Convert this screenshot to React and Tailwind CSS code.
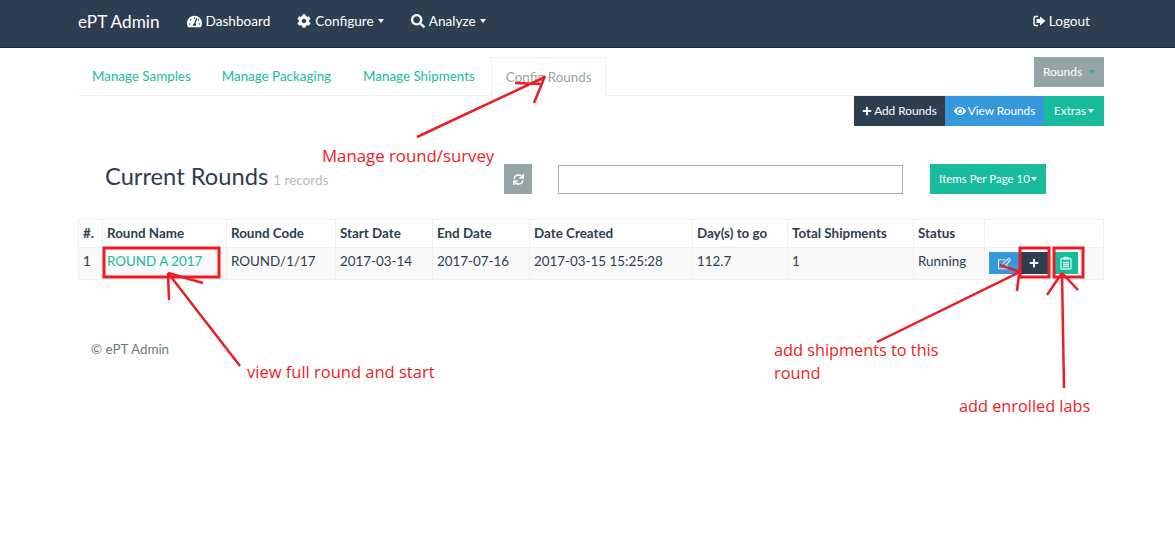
import { FaTachometerAlt, FaCog, FaSearch, FaPlus, FaEye, FaSync, FaRegEdit } from "react-icons/fa";

const columns = [
  ["#.", "w-[24px]"],
  ["Round Name", "w-[124px]"],
  ["Round Code", "w-[109px]"],
  ["Start Date", "w-[97px]"],
  ["End Date", "w-[97px]"],
  ["Date Created", "w-[163px]"],
  ["Day(s) to go", "w-[95px]"],
  ["Total Shipments", "w-[126px]"],
  ["Status", "w-[71px]"],
  ["", "w-[119px]"],
];

const row = ["1", "ROUND A 2017", "ROUND/1/17", "2017-03-14", "2017-07-16", "2017-03-15 15:25:28", "112.7", "1", "Running"];

function Caret({ className = "border-t-white" }) {
  return <span className={`inline-block w-0 h-0 border-x-[3px] border-x-transparent border-t-[4px] ${className}`} />;
}

function NavItem({ icon, label, caret }) {
  return (
    <a className="flex items-center gap-[4px] text-white text-[13.6px] mr-[27px]">
      {icon}
      <span>{label}</span>
      {caret && <Caret />}
    </a>
  );
}

function LogoutIcon() {
  return (
    <svg width="13" height="12" viewBox="0 0 13 12">
      <path d="M5 1.5H2.5A1.5 1.5 0 0 0 1 3v6a1.5 1.5 0 0 0 1.5 1.5H5" fill="none" stroke="white" strokeWidth="1.4" />
      <path d="M7 1.5 L12.5 6 L7 10.5 V8 H3.5 V4 H7 Z" fill="white" />
    </svg>
  );
}

function ClipboardIcon() {
  return (
    <svg width="12" height="14" viewBox="0 0 12 14" fill="none" stroke="#c9f1e8" strokeWidth="1.3">
      <rect x="1" y="2.5" width="10" height="10.5" rx="1" />
      <rect x="3.5" y="0.8" width="5" height="3" fill="#c9f1e8" stroke="none" />
      <path d="M3 6.5H9M3 8.5H9M3 10.5H9" />
    </svg>
  );
}

function Annotations() {
  return (
    <>
      <svg className="absolute left-0 top-0 pointer-events-none" width="1175" height="541" fill="none" stroke="#ed1c24" strokeWidth="2.5">
        {/* config rounds */}
        <path d="M417 137 L545 77 M515 83 L541 84 M545 76 L534 103" />
        {/* round name */}
        <rect x="104" y="248" width="115" height="29" strokeWidth="3" />
        <path d="M240 366 L168 273 M168 273 L203 283 M168 273 L169 300" />
        {/* shipments */}
        <rect x="1020" y="248" width="29" height="29" strokeWidth="3" />
        <rect x="1054" y="248" width="29" height="29" strokeWidth="3" />
        <path d="M877 342 L1020 272 M1000 265 L1020 272 M1017 291 L1019 275" />
        {/* enrolled labs */}
        <path d="M1064 388 L1062 273 M1047 295 L1062 273 M1078 290 L1062 273" />
      </svg>
      <div className="absolute left-[322px] top-[143px] text-[#ed1c24] text-[16.8px] font-['Open_Sans',sans-serif]">Manage round/survey</div>
      <div className="absolute left-[247px] top-[360px] text-[#ed1c24] text-[16.5px] font-['Open_Sans',sans-serif]">view full round and start</div>
      <div className="absolute left-[774px] top-[339px] w-[190px] leading-[23px] text-[#ed1c24] text-[16.3px] font-['Open_Sans',sans-serif]">add shipments to this round</div>
      <div className="absolute left-[959px] top-[394px] text-[#ed1c24] text-[16.3px] font-['Open_Sans',sans-serif]">add enrolled labs</div>
    </>
  );
}

export default function App() {
  return (
    <div className="relative h-[541px] overflow-hidden bg-white font-['Lato',sans-serif] text-[13.4px] text-[#2c3e50]">
      <nav className="h-[48px] bg-[#2c3e50] border-b border-[#1f2d3a] pl-[78px] pr-[85px] pb-[4px] flex items-center">
        <span className="text-white text-[17.2px] mr-[27px]">ePT Admin</span>
        <NavItem icon={<FaTachometerAlt className="text-[15px]" />} label="Dashboard" />
        <NavItem icon={<FaCog className="text-[14px]" />} label="Configure" caret />
        <NavItem icon={<FaSearch className="text-[14px]" />} label="Analyze" caret />
        <a className="ml-auto flex items-center gap-[3px] text-white text-[13.6px]">
          <LogoutIcon />
          Logout
        </a>
      </nav>

      <div className="pl-[78px] w-[1104px]">
        <div className="flex items-start pt-[9px]">
          <div className="flex-1 h-[39px] border-b border-[#ecf0f1] flex text-[#18bc9c]">
            <a className="px-[14px] leading-[38px]">Manage Samples</a>
            <a className="ml-[3px] px-[14px] leading-[38px]">Manage Packaging</a>
            <a className="ml-[4px] px-[14px] leading-[38px]">Manage Shipments</a>
            <a className="ml-[2px] px-[14px] h-[39px] leading-[38px] text-[#95a5a6] bg-white border border-[#ecf0f1] border-b-white">Config Rounds</a>
          </div>
          <button className="h-[30px] w-[70px] bg-[#95a5a6] text-white text-[12px] flex items-center justify-center gap-[7px]">
            Rounds <Caret className="border-t-[#18bc9c]" />
          </button>
        </div>

        <div className="flex justify-end text-white text-[11.8px]">
          <button className="h-[30px] w-[91px] bg-[#2c3e50] flex items-center justify-center gap-[2px]">
            <FaPlus className="text-[10px]" /> Add Rounds
          </button>
          <button className="h-[30px] w-[99px] bg-[#3498db] flex items-center justify-center gap-[2px]">
            <FaEye className="text-[12px]" /> View Rounds
          </button>
          <button className="h-[30px] w-[60px] bg-[#18bc9c] flex items-center justify-center gap-[2px]">
            Extras <Caret />
          </button>
        </div>

        <div className="flex items-center mt-[38px] h-[30px]">
          <h1 className="ml-[27px] w-[399px] pb-[5px] text-[23.7px] font-normal whitespace-nowrap">
            Current Rounds <small className="ml-[-1px] text-[13.5px] text-[#b4bcc2]">1 records</small>
          </h1>
          <button className="w-[28px] h-[30px] bg-[#95a5a6] text-white flex items-center justify-center">
            <FaSync className="text-[11px]" />
          </button>
          <input className="ml-[26px] w-[345px] h-[29px] border border-[#aaaaaa] bg-white" />
          <button className="ml-[27px] w-[116px] h-[30px] bg-[#18bc9c] text-white text-[11.5px] flex items-center justify-center gap-px">
            Items Per Page 10 <Caret />
          </button>
        </div>

        <table className="mt-[25px] w-[1025px] table-fixed border-collapse">
          <thead>
            <tr className="h-[28px]">
              {columns.map(([label, width]) => (
                <th key={label} className={`${width} border border-[#ecf0f1] px-[4px] pb-[1px] text-left font-bold`}>{label}</th>
              ))}
            </tr>
          </thead>
          <tbody>
            <tr className="h-[32px] bg-[#f9f9f9]">
              {row.map((value, i) => (
                <td key={i} className={`border border-[#ecf0f1] px-[4px] pb-[5px] ${i === 1 ? "text-[#18bc9c]" : ""}`}>{value}</td>
              ))}
              <td className="border border-[#ecf0f1] pl-[4px] pb-[1px]">
                <div className="flex text-white text-[12px]">
                  <span className="w-[30px] h-[22px] bg-[#3498db] flex items-center justify-center"><FaRegEdit className="text-[13px] text-[#d6ecfa]" /></span>
                  <span className="w-[29px] h-[22px] bg-[#2c3e50] flex items-center justify-center"><FaPlus className="text-[10px]" /></span>
                  <span className="ml-[6px] w-[24px] h-[22px] bg-[#18bc9c] flex items-center justify-center"><ClipboardIcon /></span>
                </div>
              </td>
            </tr>
          </tbody>
        </table>

        <p className="mt-[59px] ml-[13px] text-[13.4px] text-[#6b7b7d]">© ePT Admin</p>
      </div>

      <Annotations />
    </div>
  );
}
